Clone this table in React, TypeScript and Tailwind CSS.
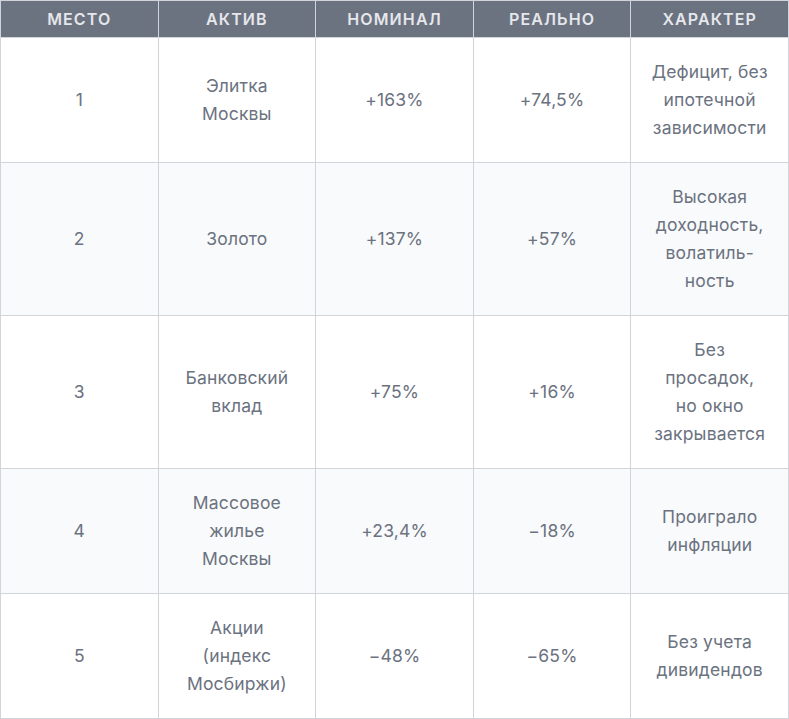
import React from "react";

const rows: { place: string; asset: React.ReactNode; nom: string; real: string; note: React.ReactNode }[] = [
  { place: "1", asset: <>Элитка<br />Москвы</>, nom: "+163%", real: "+74,5%", note: <>Дефицит, без<br />ипотечной<br />зависимости</> },
  { place: "2", asset: "Золото", nom: "+137%", real: "+57%", note: <>Высокая<br />доходность,<br />волатиль-<br />ность</> },
  { place: "3", asset: <>Банковский<br />вклад</>, nom: "+75%", real: "+16%", note: <>Без<br />просадок,<br />но окно<br />закрывается</> },
  { place: "4", asset: <>Массовое<br />жилье<br />Москвы</>, nom: "+23,4%", real: "−18%", note: <>Проиграло<br />инфляции</> },
  { place: "5", asset: <>Акции<br />(индекс<br />Мосбиржи)</>, nom: "−48%", real: "−65%", note: <>Без учета<br />дивидендов</> },
];

const heads = ["МЕСТО", "АКТИВ", "НОМИНАЛ", "РЕАЛЬНО", "ХАРАКТЕР"];

export default function App() {
  return (
    <div className="w-[789px] bg-white" style={{ fontFamily: "Inter, 'Noto Sans', sans-serif" }}>
      <table className="w-full table-fixed border-collapse text-center">
        <thead>
          <tr className="bg-[#6b7280]">
            {heads.map((h) => (
              <th key={h} className="border border-[#d1d5db] px-3 py-2 text-[16px] leading-[20px] font-semibold tracking-[0.07em] text-[#e5e7eb]">
                {h}
              </th>
            ))}
          </tr>
        </thead>
        <tbody>
          {rows.map((r, i) => (
            <tr key={r.place} className={i % 2 === 1 ? "bg-[#f9fafb]" : "bg-white"}>
              {[r.place, r.asset, r.nom, r.real, r.note].map((c, j) => (
                <td key={j} className="border border-[#d1d5db] px-3 py-5 text-[17.5px] leading-7 tracking-[0.01em] text-[#6b7280] align-middle">
                  {c}
                </td>
              ))}
            </tr>
          ))}
        </tbody>
      </table>
    </div>
  );
}
